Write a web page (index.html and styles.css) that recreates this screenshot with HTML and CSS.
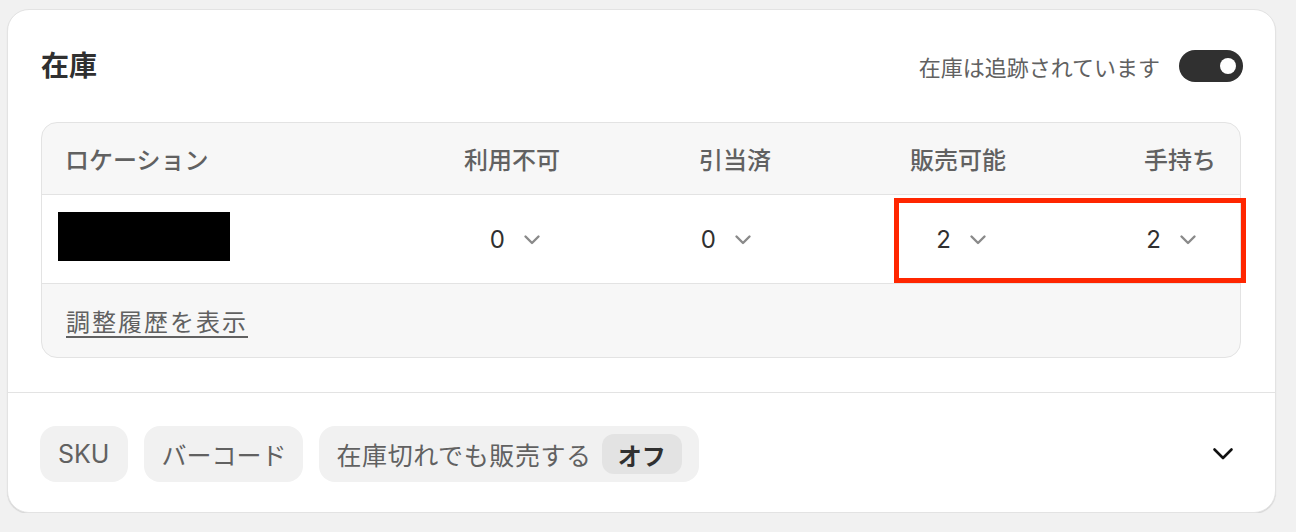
FILE: index.html
```html
<!DOCTYPE html>
<html lang="ja">
<head>
<meta charset="utf-8">
<title>在庫</title>
<link rel="stylesheet" href="styles.css">
</head>
<body>
<div class="card">
  <div class="card-main">
    <div class="card-head">
      <h2 class="title">在庫</h2>
      <div class="tracking">
        <span class="tracking-label">在庫は追跡されています</span>
        <span class="toggle"><span class="knob"></span></span>
      </div>
    </div>
    <div class="table">
      <div class="row head">
        <div class="cell loc">ロケーション</div>
        <div class="cell num">利用不可</div>
        <div class="cell num">引当済</div>
        <div class="cell num">販売可能</div>
        <div class="cell num">手持ち</div>
      </div>
      <div class="row body">
        <div class="cell loc"><span class="redacted"></span></div>
        <div class="cell num"><span class="qty">0<svg class="chev" viewBox="0 0 20 20"><path d="M3.5 7.5 L10 14 L16.5 7.5"/></svg></span></div>
        <div class="cell num"><span class="qty">0<svg class="chev" viewBox="0 0 20 20"><path d="M3.5 7.5 L10 14 L16.5 7.5"/></svg></span></div>
        <div class="cell num"><span class="qty">2<svg class="chev" viewBox="0 0 20 20"><path d="M3.5 7.5 L10 14 L16.5 7.5"/></svg></span></div>
        <div class="cell num"><span class="qty">2<svg class="chev" viewBox="0 0 20 20"><path d="M3.5 7.5 L10 14 L16.5 7.5"/></svg></span></div>
      </div>
      <div class="table-foot"><a class="history" href="#">調整履歴を表示</a></div>
      <div class="highlight"></div>
    </div>
  </div>
  <div class="card-foot">
    <div class="chips">
      <span class="chip chip-sku">SKU</span>
      <span class="chip">バーコード</span>
      <span class="chip"><span class="chip-label">在庫切れでも販売する</span><span class="pill">オフ</span></span>
    </div>
    <span class="expand"><svg viewBox="0 0 24 24"><path d="M3.5 7.5 L12 16 L20.5 7.5"/></svg></span>
  </div>
</div>
</body>
</html>
```
FILE: styles.css
```css
body {
  margin: 0;
  background: #f1f1f1;
  font-family: Inter, "Noto Sans CJK JP", sans-serif;
  color: #303030;
}

.card {
  box-sizing: border-box;
  margin: 9px 0 0 7px;
  width: 1269px;
  background: #ffffff;
  border: 1px solid #e3e3e3;
  border-radius: 22px;
  box-shadow: 0 1px 1px rgba(0, 0, 0, 0.12);
}

.card-main {
  padding: 32px 32px 34px 33px;
}

.card-head {
  display: flex;
  justify-content: space-between;
  align-items: center;
  height: 48px;
}

.title {
  margin: 0;
  font-size: 28px;
  font-weight: 700;
  line-height: 1;
  color: #303030;
}

.tracking {
  display: flex;
  align-items: center;
  gap: 19px;
}

.tracking-label {
  font-size: 22px;
  color: #616161;
}

.toggle {
  position: relative;
  display: block;
  width: 64px;
  height: 32px;
  border-radius: 16px;
  background: #303030;
}

.knob {
  position: absolute;
  right: 7px;
  top: 8px;
  width: 16px;
  height: 16px;
  border-radius: 50%;
  background: #ffffff;
}

.table {
  position: relative;
  margin: 32px 2px 0 0;
  border: 1px solid #e3e3e3;
  border-radius: 16px;
  background: #f7f7f7;
}

.row {
  display: grid;
  grid-template-columns: 1fr 96px 211px 235px 210px;
  align-items: center;
  padding: 0 24px 0 23px;
  border-bottom: 1px solid #e3e3e3;
}

.row.head {
  height: 71px;
  font-size: 24px;
  font-weight: 500;
  color: #616161;
}

.row.body {
  height: 88px;
  background: #ffffff;
}

.num {
  justify-self: end;
  white-space: nowrap;
}

.redacted {
  display: block;
  width: 172px;
  height: 49px;
  margin: -6px 0 0 -7px;
  background: #000000;
}

.qty {
  display: inline-flex;
  align-items: center;
  gap: 17px;
  padding-right: 18px;
  font-size: 24px;
  color: #303030;
}

.chev {
  width: 20px;
  height: 20px;
}

.chev path {
  fill: none;
  stroke: #8a8a8a;
  stroke-width: 2.4;
  stroke-linecap: round;
  stroke-linejoin: round;
}

.table-foot {
  display: flex;
  align-items: center;
  height: 73px;
  padding-left: 24px;
}

.history {
  font-size: 24px;
  letter-spacing: 2px;
  color: #616161;
  text-decoration: underline;
  text-decoration-thickness: 2px;
  text-underline-offset: 5px;
}

.highlight {
  position: absolute;
  left: 852px;
  top: 75px;
  box-sizing: border-box;
  width: 352px;
  height: 85px;
  border: 5px solid #ff2600;
}

.card-foot {
  display: flex;
  justify-content: space-between;
  align-items: center;
  border-top: 1px solid #e3e3e3;
  padding: 33px 32px 30px 32px;
}

.chips {
  display: flex;
  gap: 16px;
}

.chip {
  display: inline-flex;
  align-items: center;
  gap: 10px;
  height: 56px;
  padding: 0 17px;
  border-radius: 16px;
  background: #f1f1f1;
  font-size: 25px;
  color: #616161;
}

.chip-sku {
  padding: 0 19px 0 18px;
}

.chip-label {
  letter-spacing: 0.6px;
}

.pill {
  display: inline-flex;
  align-items: center;
  height: 40px;
  padding: 0 16px;
  border-radius: 12px;
  background: #e3e3e3;
  font-size: 24px;
  font-weight: 700;
  color: #303030;
}

.expand {
  display: flex;
  align-items: center;
  justify-content: center;
  width: 40px;
  height: 40px;
}

.expand svg {
  width: 24px;
  height: 24px;
}

.expand path {
  fill: none;
  stroke: #111111;
  stroke-width: 2.6;
  stroke-linecap: round;
  stroke-linejoin: round;
}
```
